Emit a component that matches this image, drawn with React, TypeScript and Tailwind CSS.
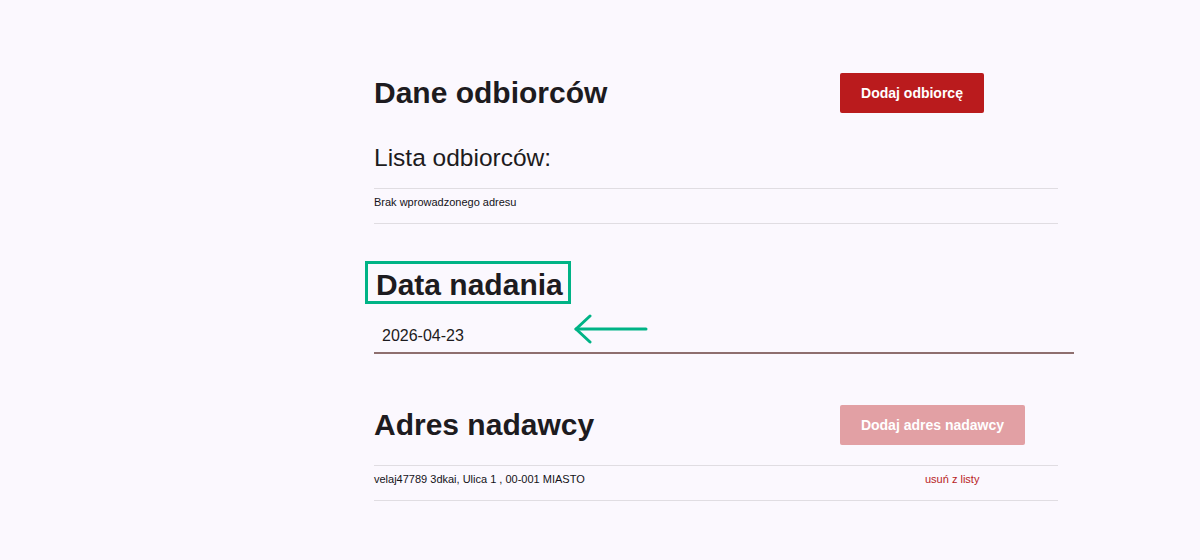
export default function App() {
  return (
    <div className="min-h-[560px] w-full overflow-hidden bg-[#fbf8fe] font-['Liberation_Sans',Arial,sans-serif] text-[#1d1b20]">
      <div className="ml-[374px] pt-[73px] w-[700px]">
        {/* Dane odbiorców */}
        <div className="flex items-center h-10">
          <h2 className="w-[466px] text-[30px] leading-[40px] font-bold">Dane odbiorców</h2>
          <button className="w-[144px] h-10 rounded-[2px] bg-[#ba1b1d] text-white text-[14px] font-bold">
            Dodaj odbiorcę
          </button>
        </div>

        <h3 className="mt-[29px] text-[24.5px] leading-[32px]">Lista odbiorców:</h3>

        <div className="mt-[14px] w-[684px] h-[36px] border-y border-[#e0dde2] pt-[7px] text-[11px] leading-[13px] text-[#141218]">
          Brak wprowadzonego adresu
        </div>

        {/* Data nadania */}
        <div className="mt-[37px] -ml-[9px]">
          <h2 className="inline-block border-[3px] border-[#00b386] pl-[8px] pr-[5px] pt-[5px] h-[43px] text-[30px] leading-[32px] font-bold">
            Data nadania
          </h2>
        </div>

        <div className="relative mt-[16px] w-[700px]">
          <div className="h-[34px] border-b-2 border-[#8e6f6f] flex items-center pl-[8px] text-[16px]">
            2026-04-23
          </div>
          <svg
            className="absolute left-[200px] top-[-6px]"
            width="76"
            height="32"
            viewBox="0 0 76 32"
            fill="none"
            stroke="#00b386"
            strokeWidth="3"
            strokeLinecap="round"
            strokeLinejoin="round"
          >
            <path d="M2 15 H72" />
            <path d="M16 2 L2 15 L16 28" />
          </svg>
        </div>

        {/* Adres nadawcy */}
        <div className="mt-[51px] flex items-center h-10">
          <h2 className="w-[466px] text-[30px] leading-[40px] font-bold">Adres nadawcy</h2>
          <button className="w-[185px] h-10 rounded-[2px] bg-[#e2a0a4] text-white text-[14px] font-bold">
            Dodaj adres nadawcy
          </button>
        </div>

        <div className="mt-[20px] w-[684px] h-[36px] border-y border-[#e0dde2] pt-[7px] flex text-[11px] leading-[13px] text-[#141218]">
          <span className="w-[551px]">velaj47789 3dkai, Ulica 1 , 00-001 MIASTO</span>
          <span className="text-[#b81c24]">usuń z listy</span>
        </div>
      </div>
    </div>
  )
}
